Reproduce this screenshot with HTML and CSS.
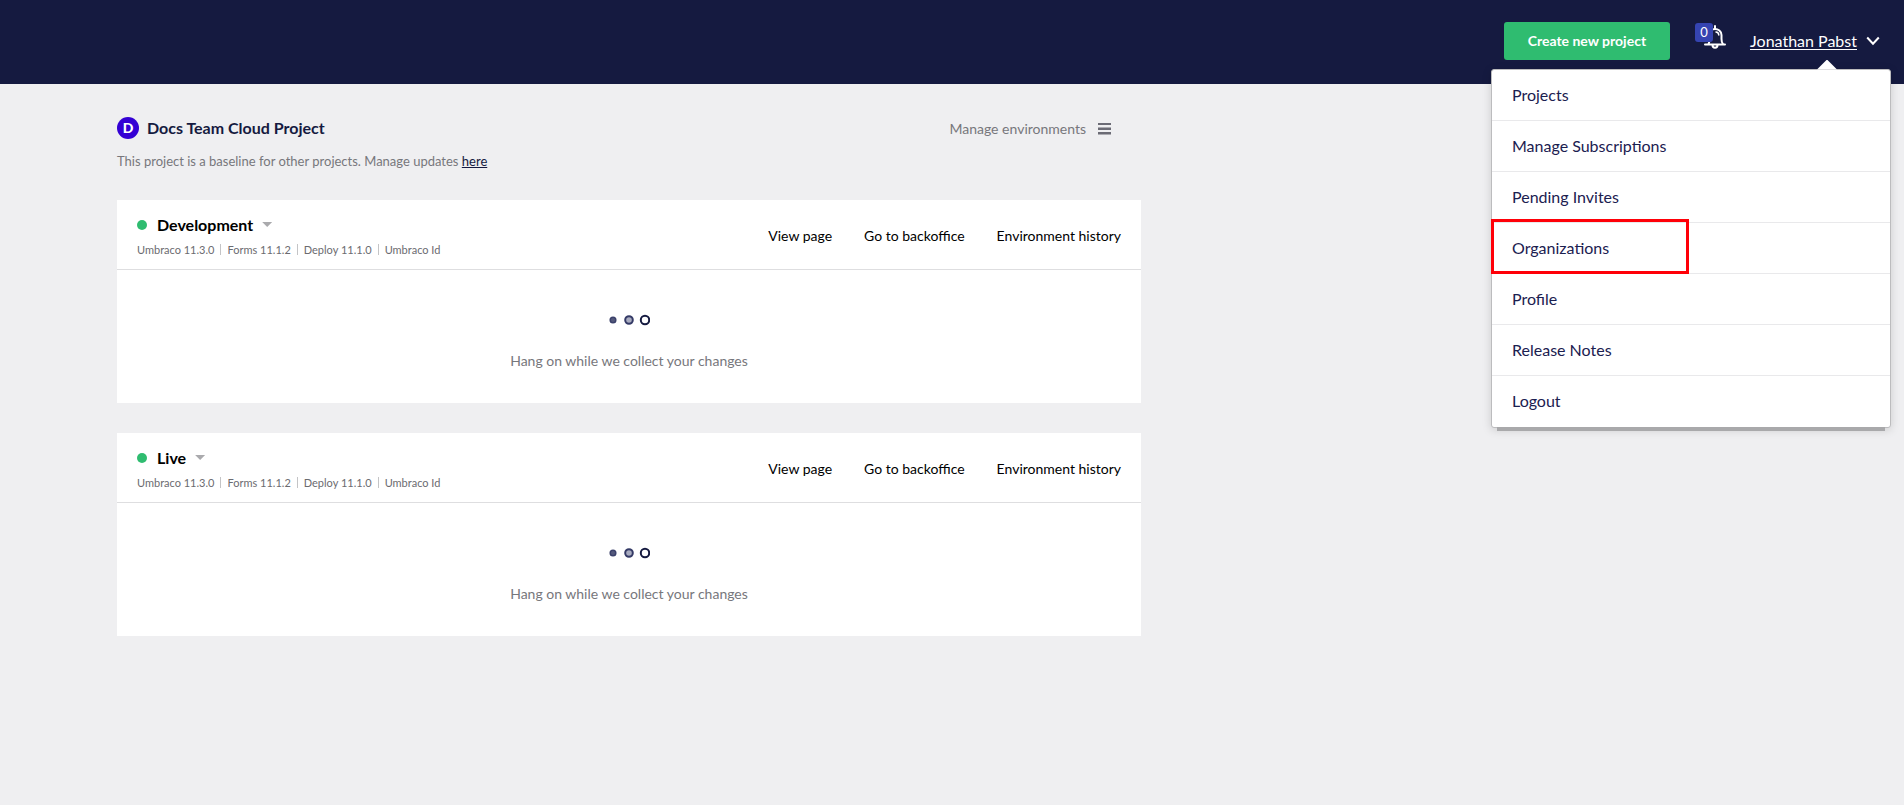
FILE: index.html
```html
<!DOCTYPE html>
<html lang="en">
<head>
<meta charset="utf-8">
<title>Docs Team Cloud Project</title>
<link rel="stylesheet" href="styles.css">
</head>
<body>
<header class="topbar">
  <button class="create" type="button">Create new project</button>
  <button class="bell" type="button" aria-label="Notifications">
    <svg class="bell-icon" width="22" height="24" viewBox="0 0 22 24" fill="none" stroke="#fff" stroke-width="2" stroke-linecap="round" stroke-linejoin="round"><path d="M11 1v3M1 19.500h20M4.500 19c.8-1.500 1-3 1-5V9.500C5.500 6 8 4 11 4s6.500 2 6.500 6v4c0 2 0 3.500 1.500 5M8.500 20a2.500 2.800 0 0 0 5 0"/><path d="M12 7c1.800.2 2.700 1.200 2.800 3" stroke-width="1.500"/></svg>
    <span class="badge">0</span>
  </button>
  <div class="account">
    <button class="user" type="button"><span class="user-name">Jonathan Pabst</span>
      <svg width="14" height="10" viewBox="0 0 14 10" fill="none" stroke="#fff" stroke-width="2"><path d="M1.200 1.500 7 7.700l5.800-6.200"/></svg>
    </button>
    <nav class="menu" aria-label="Account">
      <a href="#">Projects</a>
      <a href="#">Manage Subscriptions</a>
      <a href="#">Pending Invites</a>
      <a href="#" class="marked">Organizations</a>
      <a href="#">Profile</a>
      <a href="#">Release Notes</a>
      <a href="#">Logout</a>
    </nav>
  </div>
</header>
<main class="page">
  <div class="project">
    <div>
      <h1 class="project-title"><span class="avatar">D</span>Docs Team Cloud Project</h1>
      <p class="project-note">This project is a baseline for other projects. Manage updates <a href="#">here</a></p>
    </div>
    <button class="manage" type="button">Manage environments
      <svg width="13" height="12" viewBox="0 0 13 12" fill="#6b6b75"><path d="M0 0h13v2H0zM0 4.500h13v2.500H0zM0 9h13v2.500H0z"/></svg>
    </button>
  </div>
  <section class="card">
    <div class="card-head">
      <div>
        <h2 class="env"><span class="status"></span>Development<button class="caret" type="button" aria-label="Development options"></button></h2>
        <ul class="versions"><li>Umbraco 11.3.0</li><li>Forms 11.1.2</li><li>Deploy 11.1.0</li><li>Umbraco Id</li></ul>
      </div>
      <nav class="links"><a href="#">View page</a><a href="#">Go to backoffice</a><a href="#">Environment history</a></nav>
    </div>
    <div class="card-body">
      <svg width="42" height="12" viewBox="0 0 42 12" fill="none"><circle cx="5" cy="6" r="2.800" fill="#54597c" stroke="#3b416b" stroke-width="1.500"/><circle cx="21" cy="6" r="3.800" fill="#a9acc0" stroke="#343a66" stroke-width="2"/><circle cx="37" cy="6" r="4.200" stroke="#151a40" stroke-width="2"/></svg>
      <p>Hang on while we collect your changes</p>
    </div>
  </section>
  <section class="card">
    <div class="card-head">
      <div>
        <h2 class="env"><span class="status"></span>Live<button class="caret" type="button" aria-label="Live options"></button></h2>
        <ul class="versions"><li>Umbraco 11.3.0</li><li>Forms 11.1.2</li><li>Deploy 11.1.0</li><li>Umbraco Id</li></ul>
      </div>
      <nav class="links"><a href="#">View page</a><a href="#">Go to backoffice</a><a href="#">Environment history</a></nav>
    </div>
    <div class="card-body">
      <svg width="42" height="12" viewBox="0 0 42 12" fill="none"><circle cx="5" cy="6" r="2.800" fill="#54597c" stroke="#3b416b" stroke-width="1.500"/><circle cx="21" cy="6" r="3.800" fill="#a9acc0" stroke="#343a66" stroke-width="2"/><circle cx="37" cy="6" r="4.200" stroke="#151a40" stroke-width="2"/></svg>
      <p>Hang on while we collect your changes</p>
    </div>
  </section>
</main>
</body>
</html>
```
FILE: styles.css
```css
*, *::before, *::after { box-sizing: border-box; }
body { margin: 0; background: #efeff1; color: #000; font-family: Lato, sans-serif; font-size: 16px; }
button { font: inherit; border: 0; padding: 0; background: none; cursor: pointer; }
h1, h2, p, ul { margin: 0; padding: 0; }
.topbar { display: flex; align-items: center; justify-content: flex-end; height: 84px; padding: 0 24px 2px; background: #151a40; }
.create { height: 38px; padding: 0 24px 1px; margin-right: 25px; border-radius: 3px; background: #2fbc70; color: #fff; font-size: 14px; font-weight: 700; }
.bell { position: relative; width: 31px; height: 32px; margin-right: 24px; }
.bell-icon { display: block; margin: 0 0 8px auto; }
.badge { position: absolute; left: 0; top: -2px; width: 18px; height: 19px; border-radius: 3px; background: #3544b1; color: #fff; font-size: 13px; line-height: 19px; font-weight: 400; }
.account { position: relative; }
.user { display: flex; align-items: center; gap: 9px; color: #fff; line-height: 20px; }
.user-name { border-bottom: 1px solid #fff; line-height: 16px; }
.menu { position: absolute; z-index: 2; top: 36px; right: -11px; width: 400px; border: 1px solid #bcbcbe; border-radius: 3px; background: #fff; box-shadow: 0 2px 10px rgba(0, 0, 0, .15); }
.menu::before { content: ""; position: absolute; top: -10px; right: 53px; width: 20px; height: 10px; background: #fff; clip-path: polygon(50% 0, 100% 100%, 0 100%); }
.menu::after { content: ""; position: absolute; top: 100%; left: 5px; right: 5px; height: 4px; background: #a9a9ab; }
.menu a { position: relative; display: block; height: 51px; padding: 0 20px; border-bottom: 1px solid #e9e9eb; color: #1b2050; line-height: 50px; text-decoration: none; }
.menu a:last-child { border-bottom: 0; }
.marked::after { content: ""; position: absolute; z-index: 1; left: -1px; top: -4px; width: 198px; height: 55px; border: 3px solid #ff0008; }
.page { max-width: 1141px; padding: 32px 0 40px 117px; }
.project { display: flex; justify-content: space-between; align-items: flex-start; height: 84px; padding-right: 30px; }
.project-title { display: flex; align-items: center; gap: 8px; height: 24px; color: #151a40; font-size: 16px; font-weight: 700; line-height: 20px; }
.avatar { display: grid; place-items: center; width: 22px; height: 22px; border-radius: 50%; background: #3400d4; color: #fff; font-size: 14px; font-weight: 900; }
.project-note { margin-top: 12px; color: #77777c; font-size: 13px; line-height: 18px; }
.project-note a { color: #151a40; }
.manage { display: flex; align-items: center; gap: 12px; height: 25px; color: #77777c; font-size: 14px; }
.card { margin-bottom: 30px; background: #fff; }
.card-head { display: flex; justify-content: space-between; align-items: center; height: 70px; padding: 2px 20px 0; border-bottom: 1px solid #dedee0; }
.env { display: flex; align-items: center; height: 24px; font-size: 16px; font-weight: 700; }
.status { width: 10px; height: 10px; margin-right: 10px; border-radius: 50%; background: #2fbc70; }
.caret { width: 10px; height: 5px; margin-left: 9px; background: #aaaaad; clip-path: polygon(0 0, 100% 0, 50% 100%); }
.versions { display: flex; margin-top: 4px; list-style: none; color: #6b6b70; font-size: 11px; line-height: 18px; }
.versions li { display: flex; align-items: center; }
.versions li + li::before { content: ""; width: 1px; height: 11px; margin: 0 6px; background: #c4c4c6; }
.links { display: flex; gap: 32px; }
.links a { color: #000; font-size: 14px; text-decoration: none; }
.card-body { display: flex; flex-direction: column; align-items: center; gap: 25px; padding: 44px 20px 32px; }
.card + .card { margin-bottom: 0; }
.card-body p { color: #77777c; font-size: 14px; line-height: 20px; }
```
